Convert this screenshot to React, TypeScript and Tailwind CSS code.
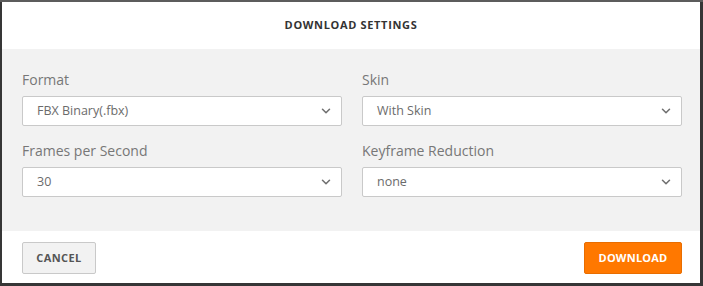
import { ChevronDown } from 'lucide-react';

const font = { fontFamily: '"Open Sans", "Noto Sans", sans-serif' };

function Field({ label, value }: { label: string; value: string }) {
  return (
    <div className="flex flex-col">
      <label className="text-[14px] leading-[20px] text-[#777] mb-[6px]">{label}</label>
      <div className="relative h-[30px] bg-white border border-[#c9c9c9] rounded-[2px] flex items-center pl-[14px] pr-[8px]">
        <span className="flex-1 text-[12.5px] text-[#6b6b6b]">{value}</span>
        <ChevronDown size={14} strokeWidth={2.6} className="text-[#707070]" />
      </div>
    </div>
  );
}

export default function App() {
  return (
    <div
      className="w-[703px] h-[286px] bg-[#363636] border-t-2 border-t-[#5c5c5c] pl-[2px] pr-[3px] pb-[3px]"
      style={font}
    >
      <div className="w-[698px] h-[281px] bg-white flex flex-col">
        {/* Header */}
        <div className="h-[47px] flex items-center justify-center">
          <h2 className="text-[11px] font-bold tracking-[0.06em] text-[#333] uppercase">
            Download Settings
          </h2>
        </div>

        {/* Body */}
        <div className="h-[182px] bg-[#f2f2f2] pl-[20px] pr-[18px] pt-[21px]">
          <div className="grid grid-cols-[320px_320px] gap-x-[20px] gap-y-[15px]">
            <Field label="Format" value="FBX Binary(.fbx)" />
            <Field label="Skin" value="With Skin" />
            <Field label="Frames per Second" value="30" />
            <Field label="Keyframe Reduction" value="none" />
          </div>
        </div>

        {/* Footer */}
        <div className="flex-1 flex items-start justify-between pl-[20px] pr-[18px] pt-[11px]">
          <button className="h-[32px] w-[74px] bg-[#f2f2f2] border border-[#c9c9c9] rounded-[2px] text-[11px] font-bold tracking-[0.04em] text-[#555]">
            CANCEL
          </button>
          <button className="h-[32px] w-[98px] bg-[#ff7800] border border-[#e86d00] rounded-[2px] text-[11px] font-bold tracking-[0.02em] text-white">
            DOWNLOAD
          </button>
        </div>
      </div>
    </div>
  );
}
